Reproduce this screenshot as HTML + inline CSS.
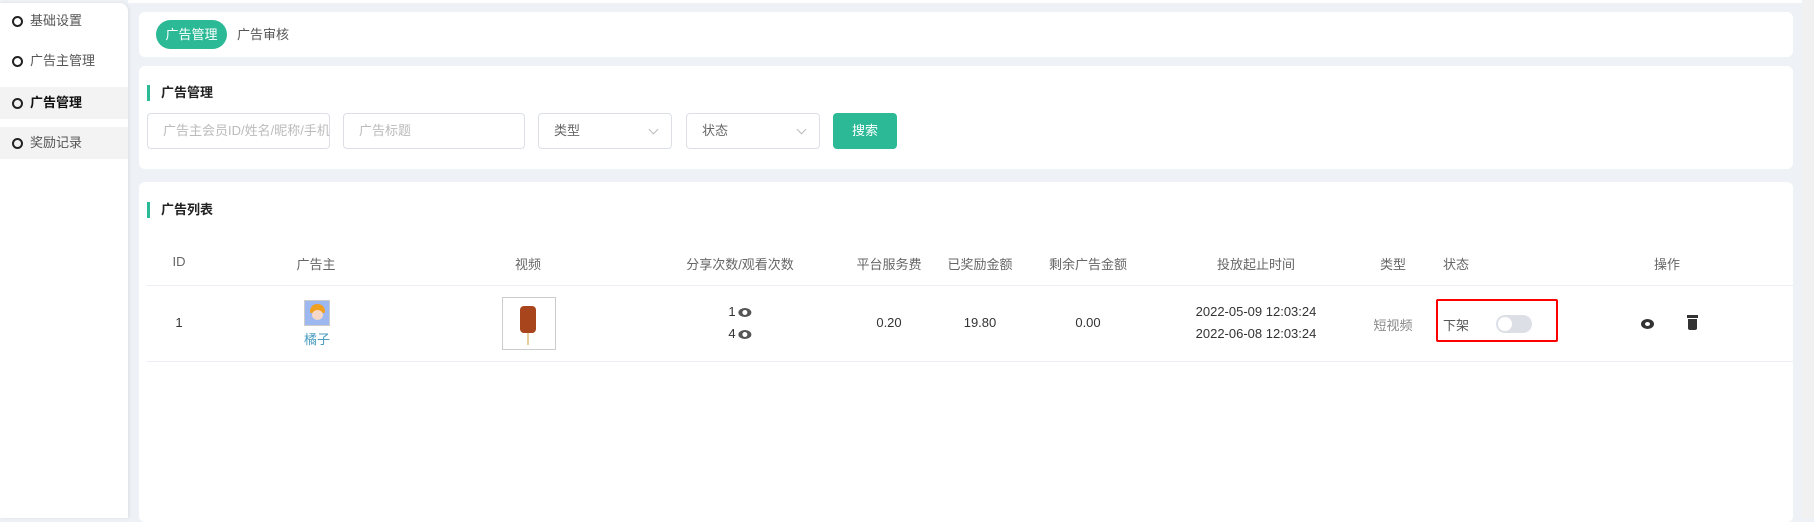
<!DOCTYPE html>
<html><head><meta charset="utf-8"><style>
*{margin:0;padding:0;box-sizing:border-box}
body{width:1814px;height:518px;overflow:hidden;background:#eef1f5;font-family:"Liberation Sans","Noto Sans CJK SC",sans-serif;font-size:13px;color:#333;position:relative}
.abs{position:absolute}
.side{left:0;top:3px;width:128px;height:515px;background:#fff;border-radius:0 8px 0 0;box-shadow:1px 0 3px rgba(0,0,0,.08)}
.si{position:absolute;left:0;width:128px;height:32px;line-height:32px;padding-left:30px;color:#555;font-size:13px}
.si:before{content:"";position:absolute;left:12px;top:11px;width:7px;height:7px;border:2px solid #222;border-radius:50%}
.card{background:#fff;border-radius:6px;position:absolute;left:139px;width:1654px}
.title{position:absolute;left:8px;font-weight:bold;font-size:13px;padding-left:11px;border-left:3px solid #2bb996;line-height:16px;color:#222}
.inp{position:absolute;top:113px;height:36px;border:1px solid #dcdfe6;border-radius:4px;background:#fff;color:#bbb;line-height:34px;padding-left:15px;font-size:13px;white-space:nowrap;overflow:hidden}
.sel{color:#666}
.sel:after{content:"";position:absolute;right:14px;top:12px;width:6px;height:6px;border-right:1px solid #bbb;border-bottom:1px solid #bbb;transform:rotate(45deg)}
.th{position:absolute;top:254px;color:#666;font-size:13px;transform:translateX(-50%);white-space:nowrap}
.td{position:absolute;color:#333;font-size:13px;transform:translateX(-50%);white-space:nowrap}
.line{position:absolute;left:147px;width:1646px;height:1px;background:#ebeef5}
.eye{display:inline-block;width:13px;height:9px;background:#555;border-radius:50%;position:relative;vertical-align:middle;margin-left:3px}
.eye:after{content:"";position:absolute;left:4px;top:2px;width:5px;height:5px;border-radius:50%;background:#fff}
</style></head><body>
<div class="abs side">
<div class="si" style="top:2px">基础设置</div>
<div class="si" style="top:42px">广告主管理</div>
<div class="si" style="top:84px;background:#f3f3f3;color:#111;font-weight:bold">广告管理</div>
<div class="si" style="top:124px;background:#f3f3f3">奖励记录</div>
</div>
<div class="abs" style="left:128px;top:0;width:1686px;height:3px;background:#fff"></div>
<div class="card" style="top:12px;height:45px">
<div class="abs" style="left:17px;top:8px;width:71px;height:29px;border-radius:15px;background:#2bb996;color:#fff;line-height:29px;text-align:center">广告管理</div>
<div class="abs" style="left:98px;top:8px;line-height:29px;color:#555">广告审核</div>
</div>
<div class="card" style="top:66px;height:103px">
<div class="title" style="top:19px">广告管理</div>
</div>
<div class="inp" style="left:147px;width:183px">广告主会员ID/姓名/昵称/手机</div>
<div class="inp" style="left:343px;width:182px">广告标题</div>
<div class="inp sel" style="left:538px;width:134px">类型</div>
<div class="inp sel" style="left:686px;width:134px">状态</div>
<div class="abs" style="left:833px;top:113px;width:64px;height:36px;background:#2bb996;border-radius:4px;color:#fff;line-height:36px;text-align:center">搜索</div>
<div class="card" style="top:182px;height:340px">
<div class="title" style="top:20px">广告列表</div>
</div>
<div class="abs" style="left:1802px;top:0;width:12px;height:518px;background:#f1f1f1"></div>
<div class="th" style="left:179px">ID</div>
<div class="th" style="left:316px">广告主</div>
<div class="th" style="left:528px">视频</div>
<div class="th" style="left:740px">分享次数/观看次数</div>
<div class="th" style="left:889px">平台服务费</div>
<div class="th" style="left:980px">已奖励金额</div>
<div class="th" style="left:1088px">剩余广告金额</div>
<div class="th" style="left:1256px">投放起止时间</div>
<div class="th" style="left:1393px">类型</div>
<div class="th" style="left:1456px">状态</div>
<div class="th" style="left:1667px">操作</div>
<div class="line" style="top:285px"></div>
<div class="line" style="top:361px"></div>
<div class="td" style="left:179px;top:315px">1</div>
<div class="abs" style="left:304px;top:300px;width:26px;height:26px;border:1px solid #ccc;background:#9db7f0;overflow:hidden"><div style="position:absolute;left:5px;top:3px;width:15px;height:9px;background:#f0a020;border-radius:8px 8px 2px 2px"></div><div style="position:absolute;left:7px;top:9px;width:11px;height:10px;background:#f6d8c8;border-radius:50%"></div></div>
<div class="td" style="left:317px;top:329px;color:#4a9cc0">橘子</div>
<div class="abs" style="left:502px;top:297px;width:54px;height:53px;border:1px solid #ccc;background:#fff"><div style="position:absolute;left:17px;top:8px;width:16px;height:27px;background:#a8451c;border-radius:4px"></div><div style="position:absolute;left:24px;top:35px;width:2px;height:12px;background:#e8cf9a"></div></div>
<div class="td" style="left:740px;top:304px">1<span class="eye"></span></div>
<div class="td" style="left:740px;top:326px">4<span class="eye"></span></div>
<div class="td" style="left:889px;top:315px">0.20</div>
<div class="td" style="left:980px;top:315px">19.80</div>
<div class="td" style="left:1088px;top:315px">0.00</div>
<div class="td" style="left:1256px;top:304px">2022-05-09 12:03:24</div>
<div class="td" style="left:1256px;top:326px">2022-06-08 12:03:24</div>
<div class="td" style="left:1393px;top:315px;color:#888">短视频</div>
<div class="abs" style="left:1436px;top:299px;width:122px;height:43px;border:2px solid #f00;border-radius:2px"></div>
<div class="abs" style="left:1443px;top:315px;color:#555">下架</div>
<div class="abs" style="left:1496px;top:315px;width:36px;height:18px;border-radius:9px;background:#dcdfe6"><div style="position:absolute;left:2px;top:2px;width:14px;height:14px;border-radius:50%;background:#fff"></div></div>
<div class="abs" style="left:1641px;top:319px;width:13px;height:10px;border-radius:50%;background:#333"><div style="position:absolute;left:4px;top:3px;width:5px;height:4px;border-radius:50%;background:#fff"></div></div>
<div class="abs" style="left:1687px;top:315px;width:11px;height:3px;background:#333"></div>
<div class="abs" style="left:1688px;top:319px;width:9px;height:11px;background:#333;border-radius:0 0 2px 2px"></div>
</body></html>
